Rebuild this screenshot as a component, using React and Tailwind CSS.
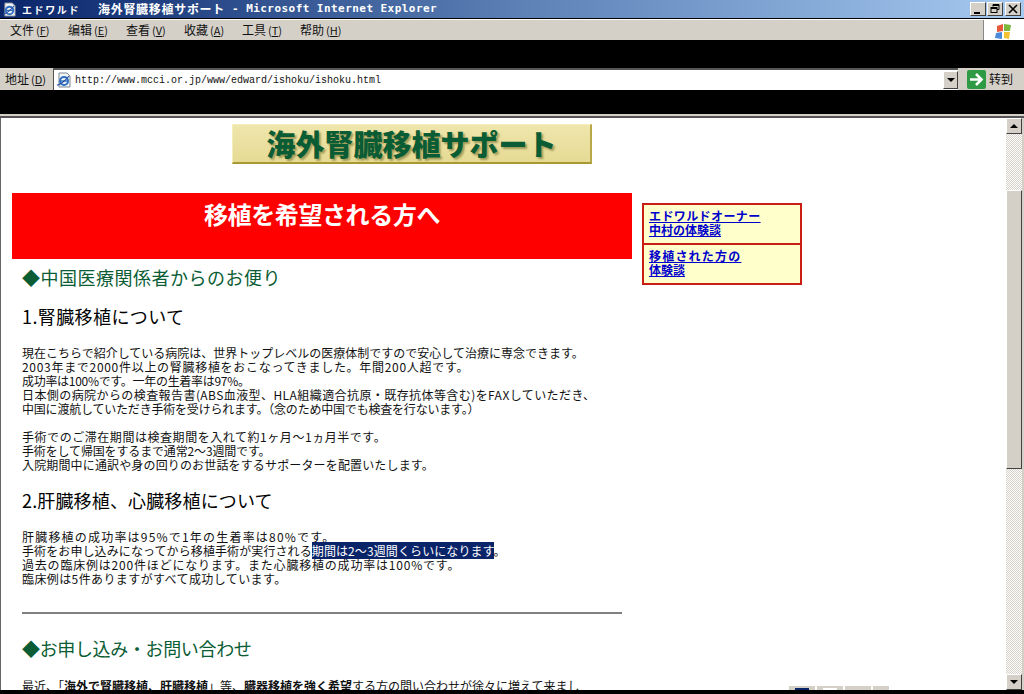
const CJK = "font-['Noto_Sans_CJK_JP','Noto_Sans_CJK_SC',sans-serif]";

const bevel = 'bg-[#d4d0c8] border border-t-white border-l-white border-r-[#404040] border-b-[#404040]';
const hatch = 'bg-[repeating-conic-gradient(#d4d0c8_0%_25%,#ffffff_0%_50%)] bg-[length:2px_2px]';

function IeIcon({ size = 16 }) {
    return (
        <svg width={size} height={size} viewBox="0 0 16 16">
            <path d="M3 1h8l3 3v11H3z" fill="#f4f4f4" stroke="#7b8794" />
            <circle cx="8" cy="9" r="4" fill="none" stroke="#2f6fc4" strokeWidth="2" />
            <path d="M4 9h8" stroke="#2f6fc4" strokeWidth="1.4" />
            <path d="M1 13c3 0 9-5 12-9" fill="none" stroke="#2a4f9c" strokeWidth="1.2" />
        </svg>
    );
}

function WinButton({ children }) {
    return (
        <div className={`w-[16px] h-[14px] flex items-center justify-center ${bevel}`}>
            {children}
        </div>
    );
}

function TitleBar() {
    return (
        <div className="h-[18px] flex items-center bg-gradient-to-r from-[#0a246a] via-[#5c7fb5] to-[#a6caf0] pl-[2px] pr-[3px]">
            <IeIcon size={15} />
            <div className="flex items-center text-white font-bold whitespace-nowrap">
                <span className={`ml-[5px] w-[76px] text-[10px] tracking-[1.6px] ${CJK}`}>エドワルド</span>
                <span className={`w-[134px] text-[12px] tracking-[0.7px] ${CJK}`}>海外腎臓移植サポート</span>
                <span className="font-['DejaVu_Sans_Mono',monospace] text-[11px] tracking-[0.45px]">- Microsoft Internet Explorer</span>
            </div>
            <div className="ml-auto flex gap-[1px]">
                <WinButton>
                    <div className="w-[6px] h-[2px] bg-black mt-[7px] mr-[2px]" />
                </WinButton>
                <WinButton>
                    <svg width="10" height="10" viewBox="0 0 10 10" fill="none" stroke="#000">
                        <path d="M3 2.5V.5h6v5H7" />
                        <rect x="1" y="3.5" width="6" height="5" />
                        <path d="M1 4.5h6M3 1.5h6" />
                    </svg>
                </WinButton>
                <div className="ml-[1px]">
                    <WinButton>
                        <svg width="10" height="10" viewBox="0 0 10 10" stroke="#000" strokeWidth="1.6">
                            <path d="M1 1l8 8M9 1l-8 8" />
                        </svg>
                    </WinButton>
                </div>
            </div>
        </div>
    );
}

function MenuItem({ label, hotkey }) {
    return (
        <span className="w-[58px] whitespace-nowrap">
            {label}
            <span className="ml-[2px] text-[11px]">(<u>{hotkey}</u>)</span>
        </span>
    );
}

function MenuBar() {
    const items = [['文件', 'F'], ['编辑', 'E'], ['查看', 'V'], ['收藏', 'A'], ['工具', 'T'], ['帮助', 'H']];
    return (
        <div className="h-[21px] mt-[1px] flex bg-[#d4d0c8] border-t border-t-white">
            <div className={`flex-1 flex pl-[10px] items-center text-[12px] text-[#111] ${CJK}`}>
                {items.map(([label, hotkey]) => (
                    <MenuItem key={label} label={label} hotkey={hotkey} />
                ))}
            </div>
            <div className="w-[41px] bg-white border-l border-l-[#888] overflow-hidden flex justify-center pt-[3px]">
                <svg width="20" height="18" viewBox="0 0 20 18">
                    <path d="M3 3l6-2v7l-6 1z" fill="#e8583a" />
                    <path d="M10 1l7 1-1 6-6 0z" fill="#7cb83c" />
                    <path d="M2 10l6-1v7l-7-1z" fill="#4a8ad8" />
                    <path d="M10 9h6l-1 7-5-1z" fill="#f2c230" />
                </svg>
            </div>
        </div>
    );
}

function AddressBar() {
    return (
        <div className="h-[22px] flex items-center bg-[#d4d0c8] mt-[1px]">
            <span className={`w-[53px] pl-[5px] text-[12px] text-[#111] whitespace-nowrap ${CJK}`}>
                地址<span className="ml-[2px] text-[11px]">(<u>D</u>)</span>
            </span>
            <div className="flex-1 h-[22px] flex items-center bg-white border-t-2 border-l border-t-[#555] border-l-[#555]">
                <div className="ml-[2px] mr-[3px]"><IeIcon size={16} /></div>
                <span className="font-['Liberation_Mono',monospace] text-[10px] text-[#111]">http://www.mcci.or.jp/www/edward/ishoku/ishoku.html</span>
                <div className={`ml-auto w-[15px] h-[18px] flex items-center justify-center ${bevel}`}>
                    <div className="border-x-[4px] border-x-transparent border-t-[4px] border-t-black" />
                </div>
            </div>
            <div className="w-[66px] flex items-center pl-[9px] gap-[3px]">
                <svg width="19" height="19" viewBox="0 0 19 19">
                    <rect width="19" height="19" rx="2" fill="#2f9a44" />
                    <path d="M3 9.500h11M9 4l5.500 5.500L9 15" fill="none" stroke="#fff" strokeWidth="2.600" />
                </svg>
                <span className={`text-[12px] text-[#111] ${CJK}`}>转到</span>
            </div>
        </div>
    );
}

function Scrollbar() {
    return (
        <div className="w-[16px] shrink-0 flex flex-col">
            <div className={`h-[16px] flex items-center justify-center ${bevel}`}>
                <div className="border-x-[4px] border-x-transparent border-b-[4px] border-b-black" />
            </div>
            <div className={`h-[56px] ${hatch}`} />
            <div className={`h-[279px] ${bevel}`} />
            <div className={`flex-1 ${hatch}`} />
            <div className={`h-[16px] flex items-center justify-center ${bevel}`}>
                <div className="border-x-[4px] border-x-transparent border-t-[4px] border-t-black" />
            </div>
        </div>
    );
}

function SideLink({ lines }) {
    return (
        <a className="block bg-[#ffffcc] pl-[5px] pt-[4px] h-[38px] text-[#0000cc] font-bold underline text-[12px] leading-[14px]">
            {lines.map(([text, cls]) => <div key={text} className={cls}>{text}</div>)}
        </a>
    );
}

function TextBlock({ lines }) {
    return (
        <div className="pl-[10px] text-[12px] leading-[14px] text-[#111] whitespace-nowrap">
            {lines.map((line, i) => <div key={i} className={`h-[14px] ${line.c}`}>{line.t}</div>)}
        </div>
    );
}

function Logo() {
    return (
        <div className="pl-[231px] pt-[6px]">
            <div className="w-[360px] h-[40px] flex items-center justify-center bg-gradient-to-b from-[#efe6ac] to-[#e6da94] border-r-2 border-b-2 border-r-[#b8a848] border-b-[#a89a30] border-t border-l border-t-[#f4eebc] border-l-[#f4eebc]">
                <span className="text-[#0a5c34] font-black text-[29px] leading-none whitespace-nowrap [text-shadow:2px_2px_2px_#a09a58]">海外腎臓移植サポート</span>
            </div>
        </div>
    );
}

function Page() {
    return (
        <div className={`flex-1 h-[572px] overflow-hidden bg-white ${CJK}`}>
            <Logo />
            <div className="flex mt-[29px] pl-[11px] items-start">
                <div className="w-[620px] shrink-0">
                    <div className="h-[66px] bg-[#ff0000] text-white font-bold text-[24px] tracking-[-0.4px] leading-[30px] text-center pt-[6px]">移植を希望される方へ</div>
                    <div className="pl-[10px] mt-[5px] text-[18px] leading-[26px] text-[#0a5c34] tracking-[0.5px]">◆中国医療関係者からのお便り</div>
                    <div className="pl-[10px] mt-[13px] text-[18px] leading-[26px] text-black tracking-[0.4px]">1.腎臓移植について</div>
                    <div className="mt-[17px]">
                        <TextBlock lines={[
                            { t: '現在こちらで紹介している病院は、世界トップレベルの医療体制ですので安心して治療に専念できます。', c: '' },
                            { t: '2003年まで2000件以上の腎臓移植をおこなってきました。年間200人超です。', c: 'tracking-[0.7px]' },
                            { t: '成功率は100%です。一年の生着率は97%。', c: 'tracking-[-0.3px]' },
                            { t: '日本側の病院からの検査報告書(ABS血液型、HLA組織適合抗原・既存抗体等含む)をFAXしていただき、', c: 'tracking-[0.42px]' },
                            { t: '中国に渡航していただき手術を受けられます。（念のため中国でも検査を行ないます。）', c: 'tracking-[-0.2px]' },
                            { t: '', c: '' },
                            { t: '手術でのご滞在期間は検査期間を入れて約1ヶ月～1ヵ月半です。', c: 'tracking-[0.55px]' },
                            { t: '手術をして帰国をするまで通常2～3週間です。', c: 'tracking-[-0.15px]' },
                            { t: '入院期間中に通訳や身の回りのお世話をするサポーターを配置いたします。', c: 'tracking-[0.15px]' },
                        ]} />
                    </div>
                    <div className="pl-[10px] mt-[15px] text-[18px] leading-[26px] text-black tracking-[0.15px]">2.肝臓移植、心臓移植について</div>
                    <div className="mt-[17px]">
                        <TextBlock lines={[
                            { t: '肝臓移植の成功率は95%で1年の生着率は80%です。', c: 'tracking-[1.2px]' },
                            { t: <>手術をお申し込みになってから移植手術が実行される<span className="bg-[#0a246a] text-white">期間は2～3週間くらいになります</span>。</>, c: 'tracking-[0.1px]' },
                            { t: '過去の臨床例は200件ほどになります。また心臓移植の成功率は100%です。', c: 'tracking-[0.8px]' },
                            { t: '臨床例は5件ありますがすべて成功しています。', c: 'tracking-[0.4px]' },
                        ]} />
                    </div>
                    <div className="ml-[10px] mt-[26px] w-[600px] h-[2px] bg-[#808080]" />
                    <div className="pl-[10px] mt-[21px] text-[18px] leading-[26px] text-[#0a5c34] tracking-[-0.35px]">◆お申し込み・お問い合わせ</div>
                    <div className="pl-[10px] mt-[18px] text-[12px] leading-[14px] text-[#111] whitespace-nowrap">
                        最近、「<b>海外で腎臓移植、肝臓移植</b>」等、<b>臓器移植を強く希望</b>する方の問い合わせが徐々に増えて来まし
                    </div>
                </div>
                <div className="ml-[10px] mt-[10px] w-[160px] border-2 border-[#c81e14]">
                    <SideLink lines={[['エドワルドオーナー', 'tracking-[0.4px]'], ['中村の体験談', '']]} />
                    <div className="h-[2px] bg-[#c81e14]" />
                    <SideLink lines={[['移植された方の', 'tracking-[1.2px]'], ['体験談', '']]} />
                </div>
            </div>
        </div>
    );
}

function TaskButtons() {
    return (
        <div className="absolute left-[789px] top-[686px] flex gap-[2px]">
            <div className="w-[26px] h-[4px] bg-[#d4d0c8] pt-[2px] px-[6px]"><div className="h-[2px] bg-[#0a246a]" /></div>
            <div className="w-[26px] h-[4px] bg-[#d4d0c8] pt-[2px] px-[6px]"><div className="h-[2px] bg-white" /></div>
            <div className="w-[26px] h-[4px] bg-[#d4d0c8]" />
            <div className="w-[16px] h-[4px] bg-[#d4d0c8]" />
        </div>
    );
}

export default function App() {
    return (
        <div className="w-[1024px] h-[694px] bg-black overflow-hidden relative">
            <TitleBar />
            <MenuBar />
            <div className="h-[27px] bg-black" />
            <AddressBar />
            <div className="h-[24px] bg-black" />
            <div className="h-[4px] bg-[#d4d0c8] border-b-2 border-b-[#555]" />
            <div className="flex h-[572px] border-l border-l-[#666] bg-white">
                <Page />
                <Scrollbar />
                <div className="w-[2px] bg-[#d4d0c8]" />
            </div>
            <TaskButtons />
        </div>
    );
}
